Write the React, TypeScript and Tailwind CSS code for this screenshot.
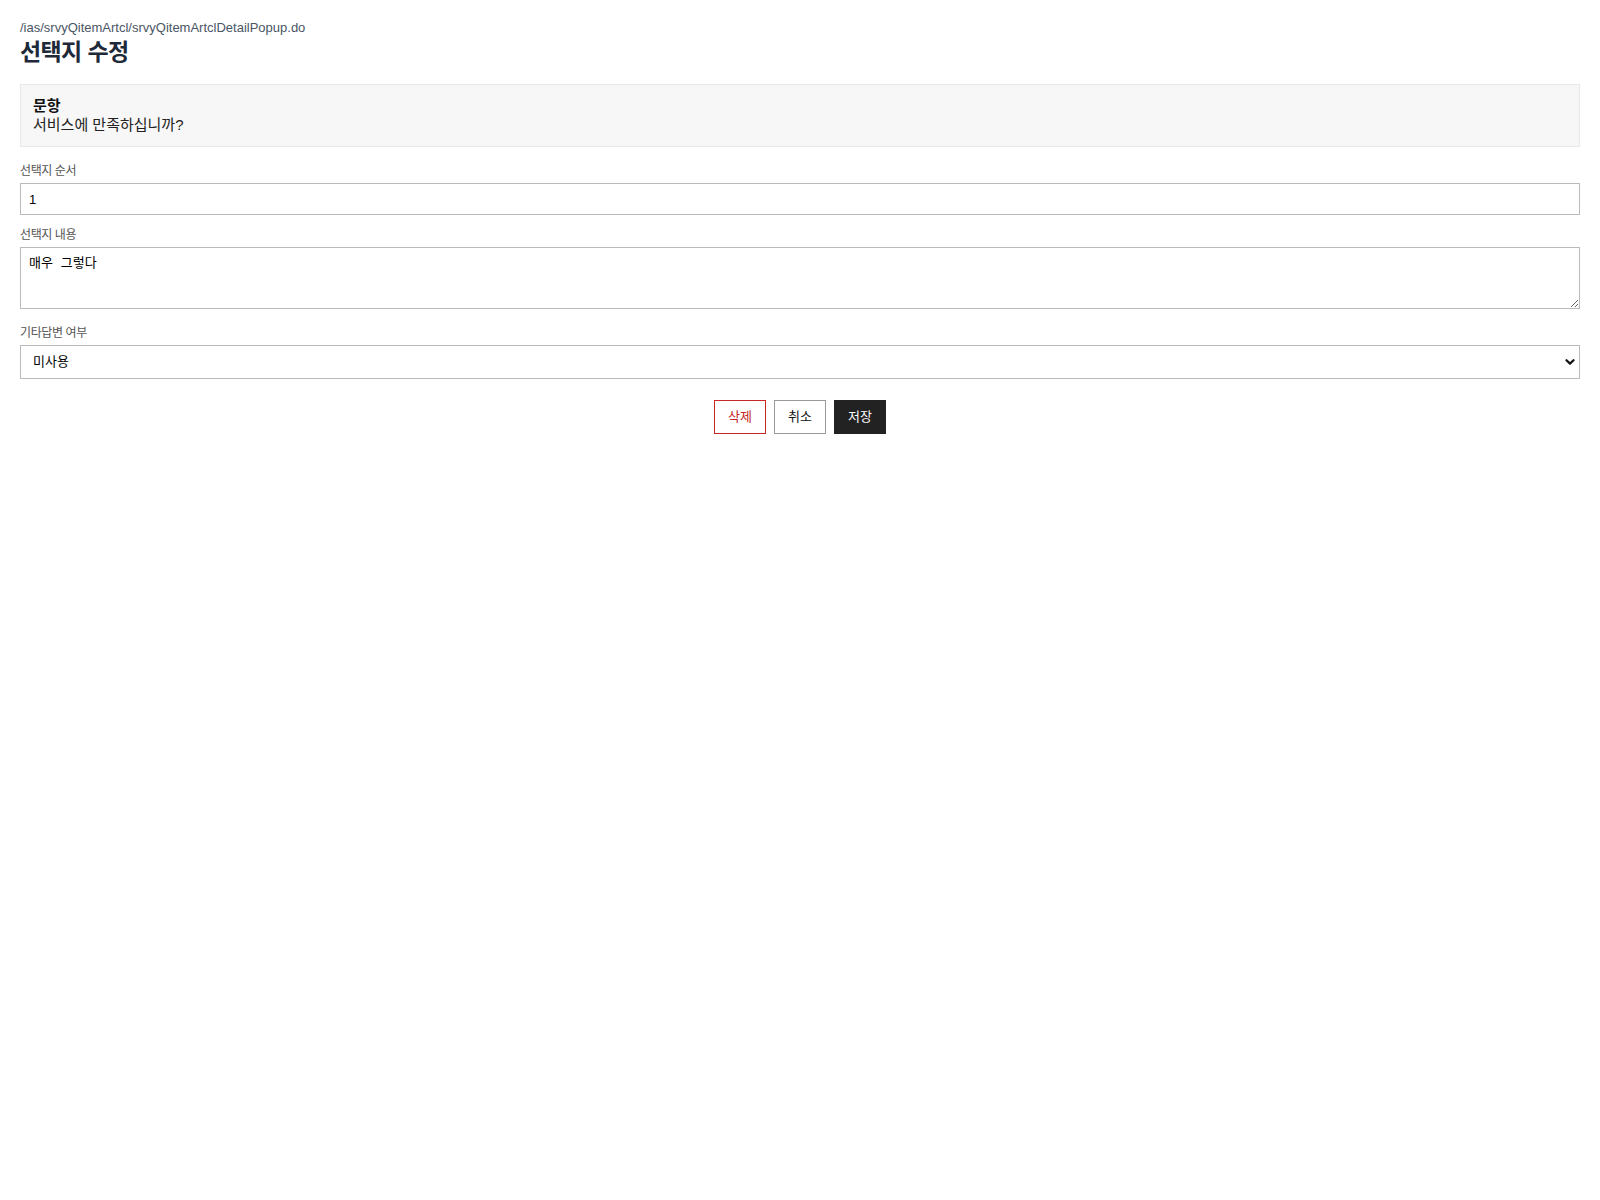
import React, { useState } from "react";

const fontStack = "font-['Liberation_Sans','Noto_Sans_CJK_KR',sans-serif]";

export default function App() {
  const [order, setOrder] = useState("1");
  const [content, setContent] = useState("매우 그렇다");
  const [etcYn, setEtcYn] = useState("N");

  return (
    <div className={`min-h-screen bg-white p-5 text-gray-800 ${fontStack}`}>
      <p className="text-[13px] leading-4 text-gray-600">/ias/srvyQitemArtcl/srvyQitemArtclDetailPopup.do</p>
      <h1 className="text-[23px] leading-8 font-bold tracking-[-0.6px] text-gray-800">선택지 수정</h1>

      {/* question summary */}
      <div className="mt-4 border border-[#e5e7eb] bg-[#f7f7f7] px-3 py-[11px]">
        <div className="text-[15px] leading-[19px] font-bold text-[#111]">문항</div>
        <div className="text-[15px] leading-5 text-[#222]">서비스에 만족하십니까?</div>
      </div>

      <div className="mt-4">
        <label className="mb-1 block text-xs leading-4 tracking-[-0.4px] text-[#555]">선택지 순서</label>
        <input
          type="text"
          value={order}
          onChange={(e) => setOrder(e.target.value)}
          className="block h-8 w-full border border-[#bbb] bg-white px-2 text-[13px] text-black outline-none"
        />
      </div>

      <div className="mt-3">
        <label className="mb-1 block text-xs leading-4 tracking-[-0.4px] text-[#555]">선택지 내용</label>
        <textarea
          value={content}
          onChange={(e) => setContent(e.target.value)}
          className="block h-[62px] w-full border border-[#bbb] bg-white px-2 pt-2 font-['Liberation_Mono','Noto_Sans_CJK_KR',monospace] text-[13px] leading-[15px] text-black outline-none"
        />
      </div>

      <div className="mt-4">
        <label className="mb-1 block text-xs leading-4 tracking-[-0.4px] text-[#555]">기타답변 여부</label>
        <div className="relative">
          <select
            value={etcYn}
            onChange={(e) => setEtcYn(e.target.value)}
            className="block h-[34px] w-full appearance-none border border-[#bbb] bg-white pl-3 text-[13px] text-black outline-none"
          >
            <option value="N">미사용</option>
            <option value="Y">사용</option>
          </select>
          <svg
            className="pointer-events-none absolute right-[5px] top-1/2 -translate-y-1/2"
            width="10"
            height="8"
            viewBox="0 0 10 8"
            fill="none"
          >
            <path d="M1.5 2.2 L5 5.6 L8.5 2.2" stroke="#111" strokeWidth="2.2" strokeLinecap="round" strokeLinejoin="round" />
          </svg>
        </div>
      </div>

      <div className="mt-[21px] flex justify-center gap-2">
        <button className="h-[34px] border border-[#c62828] bg-white px-[13px] text-[13px] text-[#c62828]">삭제</button>
        <button className="h-[34px] border border-[#999] bg-white px-[13px] text-[13px] text-[#111]">취소</button>
        <button className="h-[34px] border border-[#222] bg-[#222] px-[13px] text-[13px] text-white">저장</button>
      </div>
    </div>
  );
}
